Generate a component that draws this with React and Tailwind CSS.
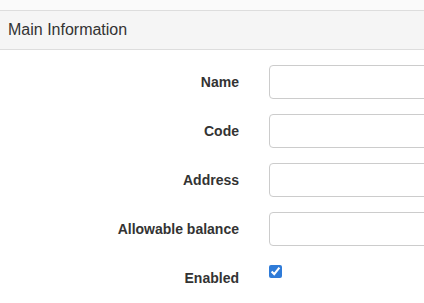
import { useState } from 'react';

const fields = [
  { name: 'name', label: 'Name' },
  { name: 'code', label: 'Code' },
  { name: 'address', label: 'Address' },
  { name: 'allowableBalance', label: 'Allowable balance' },
];

const App = () => {
  const [enabled, setEnabled] = useState(true);

  return (
    <div className="flex min-h-screen flex-col overflow-hidden bg-[#fafafa] pt-[10px] font-['Liberation_Sans',Arial,sans-serif] text-[#333]">
      <div className="flex-1 border-t border-[#ddd] bg-white">
        {/* Panel heading */}
        <div className="h-[39px] border-b border-[#ddd] bg-[#f5f5f5] px-[8px] pt-[9px] text-[16px] leading-[20px]">
          Main Information
        </div>

        {/* Panel body */}
        <div className="pt-[15px]">
          {fields.map(f => (
            <div key={f.name} className="mb-[15px] flex">
              <label
                htmlFor={f.name}
                className="w-[239px] shrink-0 pt-[7px] text-right text-[14px] font-bold leading-[20px]"
              >
                {f.label}
              </label>
              <input
                id={f.name}
                name={f.name}
                type="text"
                className="ml-[30px] h-[34px] w-[300px] shrink-0 rounded-[4px] border border-[#ccc] bg-white px-3 text-[14px] outline-none"
              />
            </div>
          ))}

          <div className="flex">
            <label
              htmlFor="enabled"
              className="w-[239px] shrink-0 pt-[7px] text-right text-[14px] font-bold leading-[20px]"
            >
              Enabled
            </label>
            <input
              id="enabled"
              type="checkbox"
              checked={enabled}
              onChange={e => setEnabled(e.target.checked)}
              className="ml-[30px] mt-[4px] h-[13px] w-[13px] accent-[#2f7bd8]"
            />
          </div>
        </div>
      </div>
    </div>
  );
};

export default App;
